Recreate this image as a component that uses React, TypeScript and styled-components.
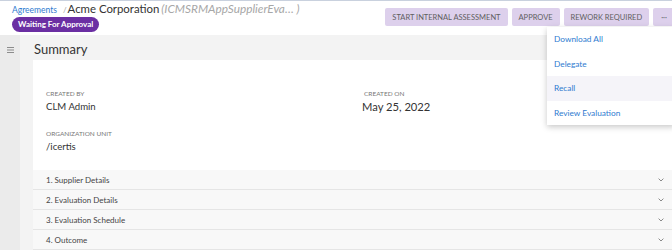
import React from 'react';
import styled, {createGlobalStyle} from 'styled-components';

const GlobalStyle = createGlobalStyle`
  html, body {
    margin: 0;
    padding: 0;
    background: #ffffff;
  }
  body {
    font-family: "Lato", "Open Sans", sans-serif;
    color: #333;
  }
  * {
    box-sizing: border-box;
  }
`

const Page = styled.div`
  width: 672px;
  height: 250px;
  overflow: hidden;
  border-top: 1px solid #c9d1de;
  position: relative;
  display: flex;
  flex-direction: column;
`

const Header = styled.div`
  height: 34px;
  display: flex;
  justify-content: space-between;
  align-items: flex-start;
  position: relative;
`

const TitleBlock = styled.div`
  padding-left: 12px;
  display: flex;
  flex-direction: column;
  align-items: flex-start;
`

const Crumbs = styled.div`
  display: flex;
  align-items: baseline;
  height: 16px;
  white-space: nowrap;
`

const Crumb = styled.span`
  font-size: 8.5px;
  color: #2f7bd0;
`

const Slash = styled.span`
  font-size: 8px;
  color: #a0a0a0;
  margin: 0 1px 0 6px;
`

const Title = styled.span`
  font-size: 11.4px;
  color: #333;
`

const SubTitle = styled.span`
  font-size: 11.8px;
  font-style: italic;
  color: #a7a7a7;
  margin-left: 2px;
`

const Badge = styled.span`
  height: 15px;
  padding: 0 6px;
  border-radius: 8px;
  background: #6b2fa3;
  color: #fff;
  font-size: 8px;
  font-weight: 700;
  line-height: 15px;
`

const Actions = styled.div`
  display: flex;
  gap: 4px;
  padding-top: 7px;
  margin-right: -3px;
  position: relative;
`

const ActionButton = styled.button<{narrow?: boolean}>`
  height: 18px;
  padding: 0 ${p => (p.narrow ? '8px' : '7px')};
  border: none;
  border-radius: 2px;
  background: #ddd0ec;
  color: #5f5f5f;
  font-family: "Lato", sans-serif;
  font-size: 7.5px;
  white-space: nowrap;
  cursor: pointer;
`

const Menu = styled.div`
  position: absolute;
  right: 0;
  top: 26px;
  width: 128px;
  background: #fff;
  box-shadow: 0 2px 6px rgba(0, 0, 0, 0.22);
  z-index: 10;
  display: flex;
  flex-direction: column;
`

const MenuItem = styled.div<{active?: boolean}>`
  height: 24.5px;
  padding-left: 7px;
  display: flex;
  align-items: center;
  font-size: 8.3px;
  color: #2f7bd0;
  background: ${p => (p.active ? '#f5f4f9' : '#fff')};
`

const Body = styled.div`
  flex: 1;
  display: flex;
  min-height: 0;
`

const Sidebar = styled.div`
  width: 20px;
  background: #ebebeb;
  display: flex;
  justify-content: center;
  padding-top: 12px;
`

const Main = styled.div`
  flex: 1;
  background: #f3f3f3;
  display: flex;
  flex-direction: column;
`

const SummaryBar = styled.div`
  height: 29px;
  padding: 2px 0 0 14px;
  display: flex;
  align-items: center;
  font-size: 13px;
  color: #333;
`

const Content = styled.div`
  flex: 1;
  padding-left: 13px;
`

const Card = styled.div`
  background: #fff;
  height: 100%;
`

const Fields = styled.div`
  display: grid;
  grid-template-columns: 318px 1fr;
  align-items: start;
  align-content: start;
  row-gap: 15px;
  padding: 29px 0 0 13px;
  height: 110px;
`

const Field = styled.div`
  display: flex;
  flex-direction: column;
`

const Label = styled.div`
  font-size: 6.5px;
  color: #777;
  text-transform: uppercase;
  line-height: 10px;
  margin-bottom: 1px;
`

const Value = styled.div<{big?: boolean}>`
  font-size: ${p => (p.big ? '11.2px' : '9.6px')};
  color: #333;
  line-height: 14px;
  margin-left: ${p => (p.big ? '-2px' : '0')};
`

const Section = styled.div`
  height: 20px;
  background: #f8f8f8;
  border-bottom: 1px solid #e5e5e5;
  display: flex;
  align-items: center;
  justify-content: space-between;
  padding: 0 8px 0 13px;
  font-size: 8px;
  color: #444;
`

const Chevron = () => (
  <svg width="6" height="4" viewBox="0 0 6 4" fill="none">
    <path d="M0.6 0.6 L3 3 L5.4 0.6" stroke="#8a8a8a" strokeWidth="1" />
  </svg>
)

const Hamburger = () => (
  <svg width="7" height="6" viewBox="0 0 7 6">
    <rect x="0" y="0" width="7" height="1" fill="#8c8c8c" />
    <rect x="0" y="2.5" width="7" height="1" fill="#8c8c8c" />
    <rect x="0" y="5" width="7" height="1" fill="#8c8c8c" />
  </svg>
)

const sections = ['1. Supplier Details', '2. Evaluation Details', '3. Evaluation Schedule', '4. Outcome']
const menuItems = ['Download All', 'Delegate', 'Recall', 'Review Evaluation']

const App = () => {
  return (
    <>
      <GlobalStyle />
      <Page>
        <Header>
          <TitleBlock>
            <Crumbs>
              <Crumb>Agreements</Crumb>
              <Slash>/</Slash>
              <Title>Acme Corporation</Title>
              <SubTitle>(ICMSRMAppSupplierEva… )</SubTitle>
            </Crumbs>
            <Badge>Waiting For Approval</Badge>
          </TitleBlock>
          <Actions>
            <ActionButton>START INTERNAL ASSESSMENT</ActionButton>
            <ActionButton>APPROVE</ActionButton>
            <ActionButton>REWORK REQUIRED</ActionButton>
            <ActionButton narrow>···</ActionButton>
            <Menu>
              {menuItems.map(item => (
                <MenuItem key={item} active={item === 'Recall'}>{item}</MenuItem>
              ))}
            </Menu>
          </Actions>
        </Header>
        <Body>
          <Sidebar>
            <Hamburger />
          </Sidebar>
          <Main>
            <SummaryBar>Summary</SummaryBar>
            <Content>
              <Card>
                <Fields>
                  <Field>
                    <Label>Created By</Label>
                    <Value>CLM Admin</Value>
                  </Field>
                  <Field>
                    <Label>Created On</Label>
                    <Value big>May 25, 2022</Value>
                  </Field>
                  <Field>
                    <Label>Organization Unit</Label>
                    <Value>/icertis</Value>
                  </Field>
                </Fields>
                {sections.map(s => (
                  <Section key={s}>
                    {s}
                    <Chevron />
                  </Section>
                ))}
              </Card>
            </Content>
          </Main>
        </Body>
      </Page>
    </>
  );
}

export default App;
